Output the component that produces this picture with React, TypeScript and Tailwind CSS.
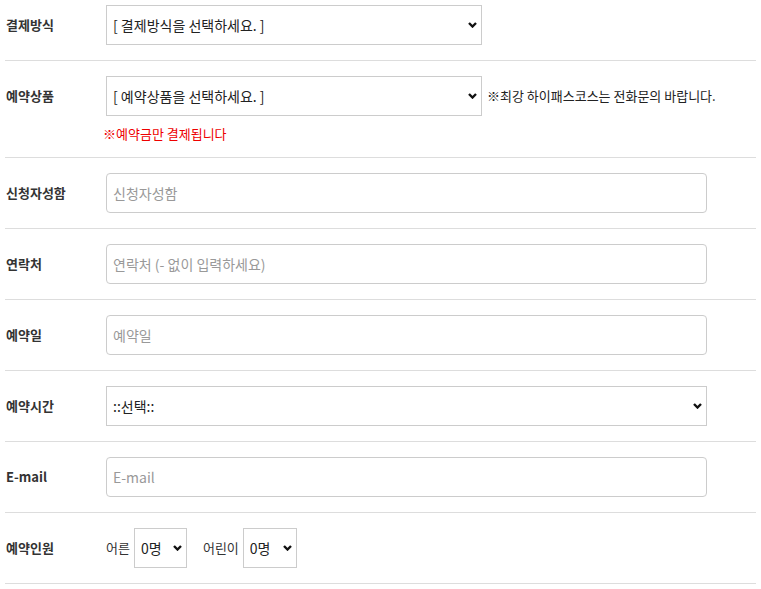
import type { ReactNode } from "react";

const font = {
  fontFamily: '"Noto Sans CJK KR", "Noto Sans", "Liberation Sans", sans-serif',
};

function Chevron() {
  return (
    <svg
      width="9"
      height="6"
      viewBox="0 0 9 6"
      className="pointer-events-none absolute right-[5px] top-1/2 -translate-y-1/2"
    >
      <path d="M1 1 L4.5 4.5 L8 1" fill="none" stroke="#111" strokeWidth="2.4" />
    </svg>
  );
}

function Select({
  value,
  width,
}: {
  value: string;
  width: string;
}) {
  return (
    <div className={`relative h-[40px] shrink-0 ${width}`}>
      <select
        className="h-full w-full appearance-none border border-[#ccc] bg-white pl-[6px] pr-6 text-[14px] text-[#222] outline-none"
        style={font}
        defaultValue={value}
      >
        <option>{value}</option>
      </select>
      <Chevron />
    </div>
  );
}

function Row({
  label,
  children,
  first,
}: {
  label: string;
  children: ReactNode;
  first?: boolean;
}) {
  return (
    <div
      className={`flex items-center border-b border-[#ddd] ${
        first ? "pt-[5px] pb-[15px]" : "py-[15px]"
      }`}
    >
      <div className="w-[101px] shrink-0 pl-[1px] text-[13px] font-bold text-[#333]">
        {label}
      </div>
      <div className="flex-1">{children}</div>
    </div>
  );
}

function TextInput({ placeholder }: { placeholder: string }) {
  return (
    <input
      placeholder={placeholder}
      className="h-[40px] w-[601px] rounded-[4px] border border-[#ccc] bg-white px-[6px] text-[14px] text-[#333] outline-none placeholder:text-[#999]"
      style={font}
    />
  );
}

export default function App() {
  return (
    <div className="min-h-[589px] bg-white px-[5px]" style={font}>
      <Row label="결제방식" first>
        <Select value="[ 결제방식을 선택하세요. ]" width="w-[376px]" />
      </Row>

      <div className="flex border-b border-[#ddd] pt-[15px] pb-[13px]">
        <div className="w-[101px] shrink-0 pl-[1px] pt-[10px] text-[13px] font-bold text-[#333]">
          예약상품
        </div>
        <div className="flex-1">
          <div className="flex items-center">
            <Select value="[ 예약상품을 선택하세요. ]" width="w-[376px]" />
            <span className="ml-[5px] whitespace-nowrap text-[13px] text-[#222]">
              ※최강 하이패스코스는 전화문의 바랍니다.
            </span>
          </div>
          <p className="-ml-[3px] mt-[8px] text-[13px] leading-[20px] text-[#e00]">
            ※예약금만 결제됩니다
          </p>
        </div>
      </div>

      <Row label="신청자성함">
        <TextInput placeholder="신청자성함" />
      </Row>
      <Row label="연락처">
        <TextInput placeholder="연락처 (- 없이 입력하세요)" />
      </Row>
      <Row label="예약일">
        <TextInput placeholder="예약일" />
      </Row>
      <Row label="예약시간">
        <Select value="::선택::" width="w-[601px]" />
      </Row>
      <Row label="E-mail">
        <TextInput placeholder="E-mail" />
      </Row>
      <Row label="예약인원">
        <div className="flex items-center text-[13px] text-[#333]">
          <span className="mr-[4px]">어른</span>
          <Select value="0명" width="w-[53px]" />
          <span className="ml-[16px] mr-[4px]">어린이</span>
          <Select value="0명" width="w-[54px]" />
        </div>
      </Row>
    </div>
  );
}
